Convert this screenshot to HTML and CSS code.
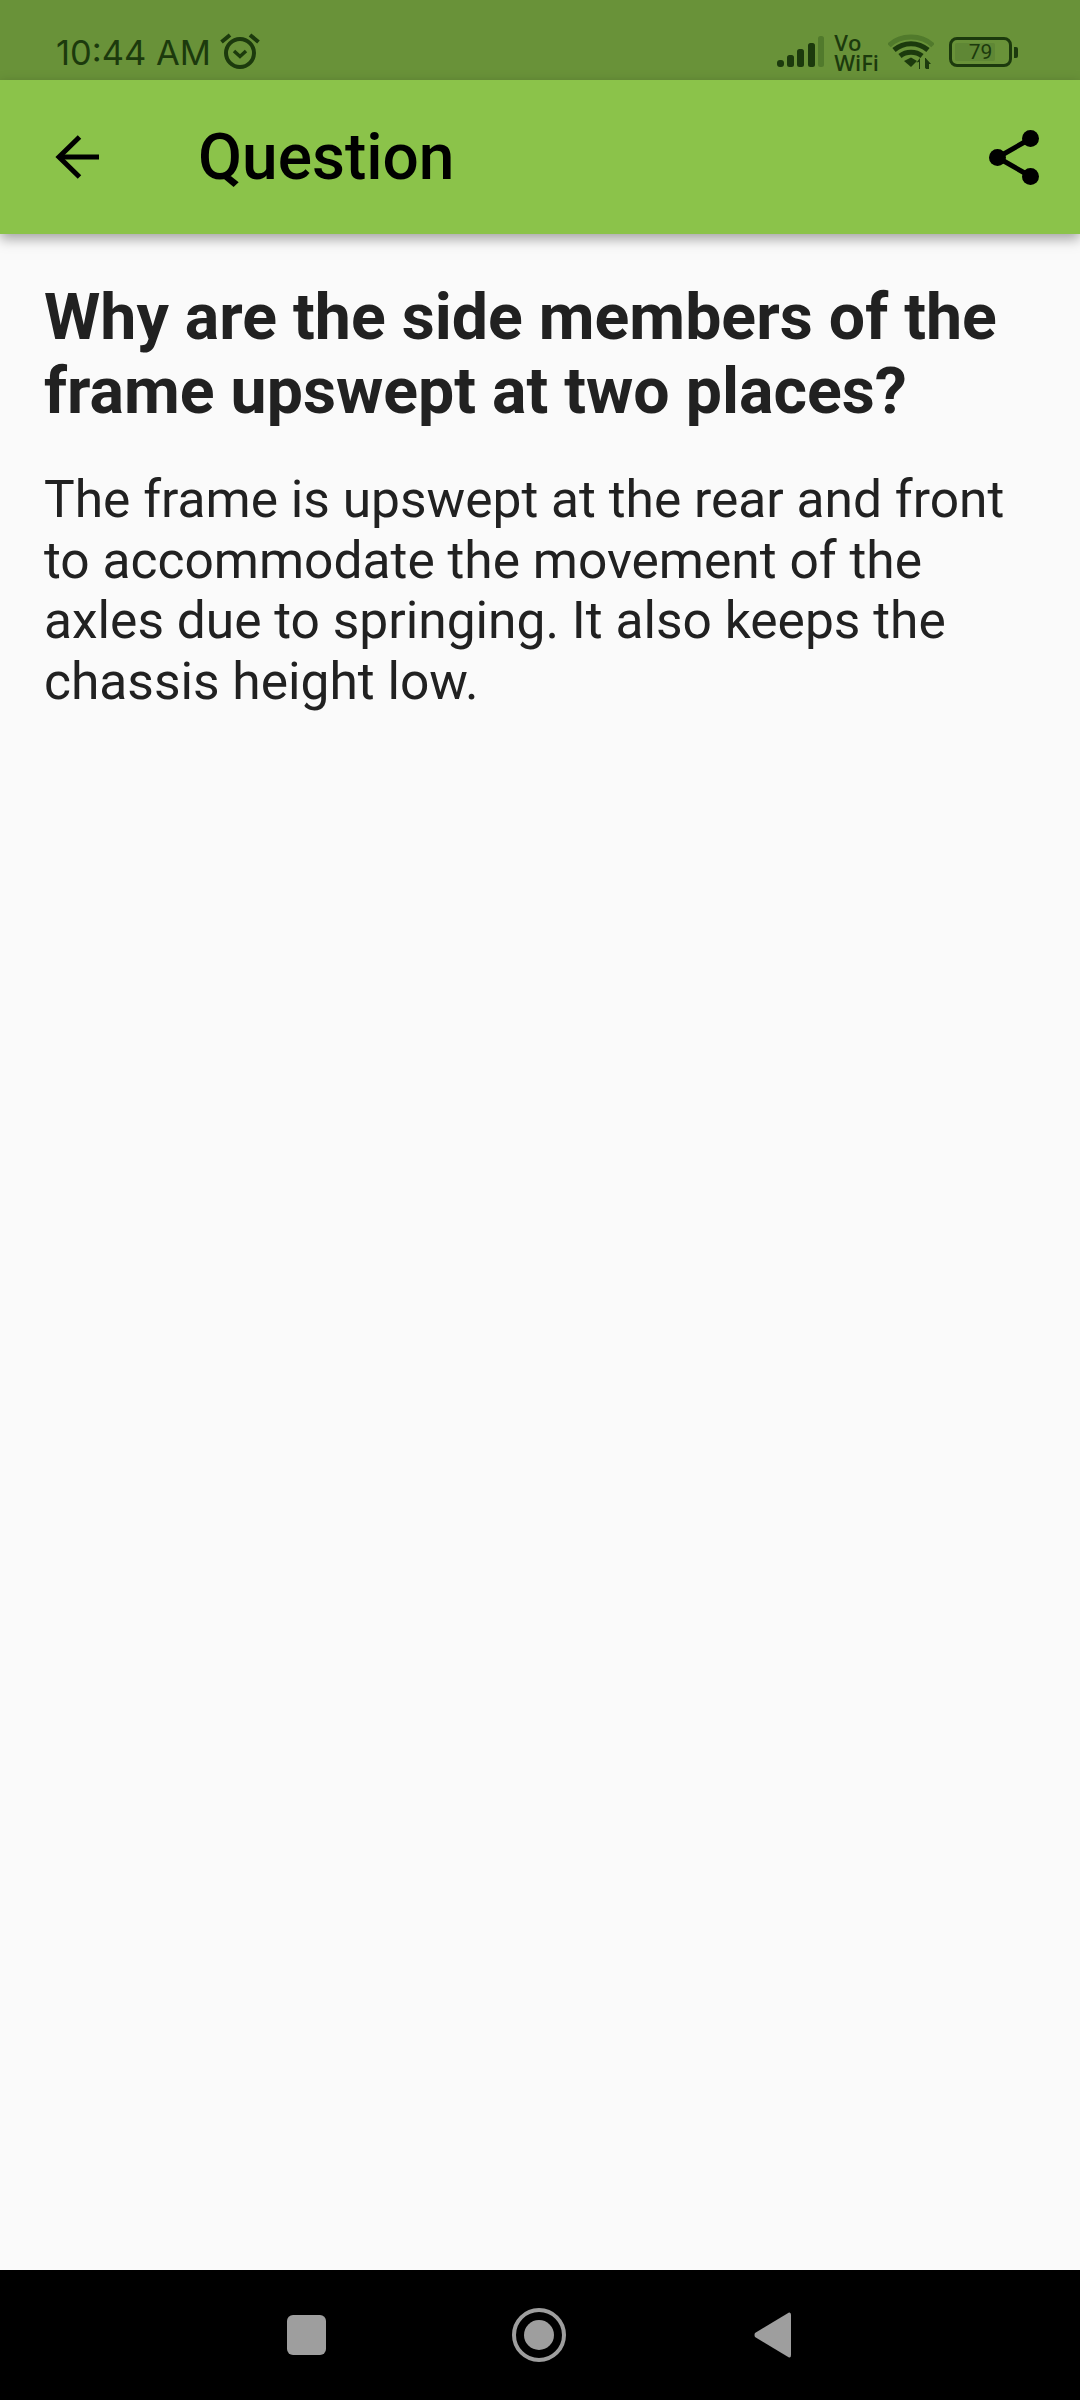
FILE: index.html
```html
<!DOCTYPE html>
<html lang="en">
<head>
    <meta charset="UTF-8">
    <meta name="viewport" content="width=device-width, initial-scale=1.0">
    <title>Question</title>
    <link rel="stylesheet" href="styles.css">
</head>
<body>
    <div class="screen">
        <div class="status-bar">
            <div class="status-left">
                <span class="time">10:44 AM</span>
                <svg class="alarm" width="40" height="36" viewBox="0 0 40 36" fill="none" stroke="#1c3a0d">
                    <circle cx="20" cy="20" r="14" stroke-width="4"/>
                    <path d="M14 18l6 5.500 6-5.500" stroke-width="3.500"/>
                    <path d="M1.500 9L10 2M38.500 9L30 2" stroke-width="4"/>
                </svg>
            </div>
            <div class="status-right">
                <svg class="signal" width="48" height="32" viewBox="0 0 48 32">
                    <rect x="0" y="24" width="7" height="7" rx="3" fill="#1c3a0d"/>
                    <rect x="10" y="19" width="7" height="12" rx="2.500" fill="#1c3a0d"/>
                    <rect x="20" y="13" width="7" height="18" rx="2.500" fill="#1c3a0d"/>
                    <rect x="31" y="7" width="7" height="24" rx="2.500" fill="#1c3a0d"/>
                    <rect x="41" y="0" width="6" height="31" rx="2.500" fill="#517a2c"/>
                </svg>
                <div class="vowifi">
                    <span>Vo</span>
                    <span>WiFi</span>
                </div>
                <svg class="wifi" width="46" height="36" viewBox="0 0 46 36" fill="none">
                    <path d="M1 11.500C12 0 34 0 45 11.500" stroke="#517a2c" stroke-width="5"/>
                    <path d="M6 16C16 7.500 30 7.500 40 16" stroke="#1c3a0d" stroke-width="5"/>
                    <path d="M12 22C18 17 28 17 34 22" stroke="#1c3a0d" stroke-width="5"/>
                    <path d="M16 27L23 23.500L29 27L23 33Z" fill="#1c3a0d"/>
                    <path d="M31 35V28L28.500 28.500L32 24V35ZM37 24V35L40 31H38V24Z" fill="#1c3a0d"/>
                    <path d="M38 35V24.500L43 30H41V35Z" fill="#1c3a0d"/>
                </svg>
                <div class="battery">
                    <div class="battery-body">
                        <div class="battery-level"></div>
                        <span class="battery-text">79</span>
                    </div>
                    <div class="battery-tip"></div>
                </div>
            </div>
        </div>

        <header class="app-bar">
            <svg class="back" width="44" height="44" viewBox="0 0 44 44" fill="none" stroke="#000" stroke-width="5">
                <path d="M44 22H4"/>
                <path d="M24.500 2L4 22L24.500 42"/>
            </svg>
            <h1 class="title">Question</h1>
            <svg class="share" width="50" height="55" viewBox="0 0 50 55" stroke="#000" stroke-width="5">
                <path d="M41 9L8.500 27.500L41 46" fill="none"/>
                <circle cx="41.500" cy="8.500" r="8.500" fill="#000" stroke="none"/>
                <circle cx="8.500" cy="27.500" r="8.500" fill="#000" stroke="none"/>
                <circle cx="41.500" cy="46.500" r="8.500" fill="#000" stroke="none"/>
            </svg>
        </header>

        <main class="content">
            <h2 class="question">Why are the side members of the frame upswept at two places?</h2>
            <p class="answer">The frame is upswept at the rear and front to accommodate the movement of the axles due to springing. It also keeps the chassis height low.</p>
        </main>

        <nav class="nav-bar">
            <div class="nav-square"></div>
            <svg class="nav-home" width="54" height="54" viewBox="0 0 54 54">
                <circle cx="27" cy="27" r="25" fill="none" stroke="#9e9e9e" stroke-width="4"/>
                <circle cx="27" cy="27" r="15" fill="#9e9e9e"/>
            </svg>
            <svg class="nav-back" width="37" height="46" viewBox="0 0 37 46">
                <path d="M35 0.500Q37 0 37 3V43Q37 46 35 45.500L1 25Q0 23 1 21Z" fill="#9e9e9e"/>
            </svg>
        </nav>
    </div>
</body>
</html>
```

FILE: styles.css
```css
* {
    box-sizing: border-box;
}
html, body {
    margin: 0;
    padding: 0;
}
body {
    font-family: Roboto, "Noto Sans", sans-serif;
    background-color: #fafafa;
}
.screen {
    width: 1080px;
    height: 2400px;
    display: flex;
    flex-direction: column;
    overflow: hidden;
}
.status-bar {
    height: 80px;
    flex: none;
    background-color: #699239;
    color: #1c3a0d;
    display: flex;
    justify-content: space-between;
    align-items: center;
    padding: 24px 62px 0 56px;
}
.status-left {
    display: flex;
    align-items: center;
    gap: 9px;
}
.time {
    font-family: Inter, Roboto, sans-serif;
    font-size: 34.500px;
    line-height: 40px;
    padding-top: 2px;
}
.alarm {
    margin-top: -3px;
}
.status-right {
    display: flex;
    align-items: center;
}
.vowifi {
    display: flex;
    flex-direction: column;
    margin-left: 9px;
    font-family: "Open Sans", sans-serif;
    font-size: 22px;
    font-weight: 600;
    line-height: 20px;
}
.wifi {
    margin-left: 9px;
}
.battery {
    display: flex;
    align-items: center;
    margin-left: 15px;
    gap: 2px;
}
.battery-body {
    position: relative;
    width: 63px;
    height: 30px;
    border: 3px solid #1c3a0d;
    border-radius: 8px;
    display: flex;
    align-items: center;
    justify-content: center;
}
.battery-level {
    position: absolute;
    left: 3px;
    top: 3px;
    bottom: 3px;
    width: 40px;
    background-color: #5f8735;
    border-radius: 2px;
}
.battery-text {
    position: relative;
    font-size: 21px;
    line-height: 24px;
    color: #1c3a0d;
}
.battery-tip {
    width: 4px;
    height: 11px;
    background-color: #1c3a0d;
    border-radius: 0 2px 2px 0;
}
.app-bar {
    height: 154px;
    flex: none;
    background-color: #8bc34a;
    display: flex;
    align-items: center;
    padding: 0 41px 0 55px;
    box-shadow: 0 5px 12px rgba(0, 0, 0, 0.35);
    position: relative;
}
.back {
    flex: none;
    margin-right: 99px;
}
.title {
    margin: 0;
    flex: 1;
    font-size: 64px;
    font-weight: 500;
    color: #000;
}
.share {
    flex: none;
}
.content {
    flex: 1;
    padding: 46px 44px 0;
    color: #212121;
}
.question {
    margin: 0;
    font-size: 64.400px;
    font-weight: 700;
    line-height: 74px;
}
.answer {
    margin: 42px 0 0;
    font-size: 51.500px;
    line-height: 60.500px;
}
.nav-bar {
    height: 130px;
    flex: none;
    background-color: #000;
    display: flex;
    align-items: center;
    padding-left: 287px;
}
.nav-square {
    width: 39px;
    height: 40px;
    background-color: #9e9e9e;
    border-radius: 6px;
}
.nav-home {
    margin-left: 186px;
}
.nav-back {
    margin-left: 188px;
}
```
